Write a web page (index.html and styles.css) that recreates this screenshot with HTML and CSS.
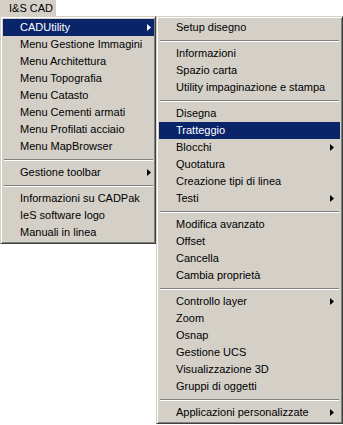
FILE: index.html
```html
<!DOCTYPE html>
<html>
<head>
<meta charset="utf-8">
<link rel="stylesheet" href="styles.css">
</head>
<body>
<div class="screen">
  <div class="left">
    <div class="menubar"><span class="bar-item">I&amp;S CAD</span></div>
    <div class="menu main">
      <div class="item active"><span>CADUtility</span><svg class="arrow" width="4" height="7" viewBox="0 0 4 7"><polygon points="0,0 4,3.5 0,7"/></svg></div>
      <div class="item"><span>Menu Gestione Immagini</span></div>
      <div class="item"><span>Menu Architettura</span></div>
      <div class="item"><span>Menu Topografia</span></div>
      <div class="item"><span>Menu Catasto</span></div>
      <div class="item"><span>Menu Cementi armati</span></div>
      <div class="item"><span>Menu Profilati acciaio</span></div>
      <div class="item"><span>Menu MapBrowser</span></div>
      <div class="sep"></div>
      <div class="item"><span>Gestione toolbar</span><svg class="arrow" width="4" height="7" viewBox="0 0 4 7"><polygon points="0,0 4,3.5 0,7"/></svg></div>
      <div class="sep"></div>
      <div class="item"><span>Informazioni su CADPak</span></div>
      <div class="item"><span>IeS software logo</span></div>
      <div class="item"><span>Manuali in linea</span></div>
    </div>
  </div>
  <div class="menu sub">
    <div class="item"><span>Setup disegno</span></div>
    <div class="sep"></div>
    <div class="item"><span>Informazioni</span></div>
    <div class="item"><span>Spazio carta</span></div>
    <div class="item"><span>Utility impaginazione e stampa</span></div>
    <div class="sep"></div>
    <div class="item"><span>Disegna</span></div>
    <div class="item active"><span>Tratteggio</span></div>
    <div class="item"><span>Blocchi</span><svg class="arrow" width="4" height="7" viewBox="0 0 4 7"><polygon points="0,0 4,3.5 0,7"/></svg></div>
    <div class="item"><span>Quotatura</span></div>
    <div class="item"><span>Creazione tipi di linea</span></div>
    <div class="item"><span>Testi</span><svg class="arrow" width="4" height="7" viewBox="0 0 4 7"><polygon points="0,0 4,3.5 0,7"/></svg></div>
    <div class="sep"></div>
    <div class="item"><span>Modifica avanzato</span></div>
    <div class="item"><span>Offset</span></div>
    <div class="item"><span>Cancella</span></div>
    <div class="item"><span>Cambia proprietà</span></div>
    <div class="sep"></div>
    <div class="item"><span>Controllo layer</span><svg class="arrow" width="4" height="7" viewBox="0 0 4 7"><polygon points="0,0 4,3.5 0,7"/></svg></div>
    <div class="item"><span>Zoom</span></div>
    <div class="item"><span>Osnap</span></div>
    <div class="item"><span>Gestione UCS</span></div>
    <div class="item"><span>Visualizzazione 3D</span></div>
    <div class="item"><span>Gruppi di oggetti</span></div>
    <div class="sep"></div>
    <div class="item"><span>Applicazioni personalizzate</span><svg class="arrow" width="4" height="7" viewBox="0 0 4 7"><polygon points="0,0 4,3.5 0,7"/></svg></div>
  </div>
</div>
</body>
</html>
```
FILE: styles.css
```css
* { box-sizing: border-box; }
html, body {
  margin: 0;
  padding: 0;
  background: #ffffff;
}
body {
  font-family: "Liberation Sans", Arial, sans-serif;
  font-size: 11px;
  color: #000000;
}
.screen {
  display: flex;
  align-items: flex-start;
  width: 343px;
  height: 425px;
  overflow: hidden;
}
.left {
  display: flex;
  flex-direction: column;
  width: 156px;
}
.menubar {
  height: 16px;
  display: flex;
}
.bar-item {
  display: block;
  width: 56px;
  height: 16px;
  line-height: 16px;
  padding-left: 9px;
  background: #d4d0c8;
  white-space: nowrap;
}
.menu {
  background: #d4d0c8;
  border: 1px solid;
  border-color: #d4d0c8 #404040 #404040 #d4d0c8;
  box-shadow: inset 1px 1px 0 #ffffff, inset -1px -1px 0 #808080;
  display: flex;
  flex-direction: column;
}
.main {
  width: 156px;
  padding: 2px 1px 2px 2px;
}
.sub {
  width: 187px;
  margin-top: 16px;
  padding: 2px;
}
.item {
  height: 17px;
  line-height: 17px;
  padding-left: 17px;
  display: flex;
  align-items: center;
  justify-content: space-between;
  white-space: nowrap;
}
.main .item { padding-right: 3px; }
.sub .item { padding-right: 6px; }
.item.active {
  background: #0a246a;
  color: #ffffff;
}
.arrow { fill: #000000; flex: none; }
.item.active .arrow { fill: #ffffff; }
.sep {
  height: 9px;
  margin: 0 1px;
  padding-top: 4px;
}
.sep::before {
  content: "";
  display: block;
  height: 1px;
  background: #808080;
  border-bottom: 1px solid #ffffff;
  box-sizing: content-box;
}
```
